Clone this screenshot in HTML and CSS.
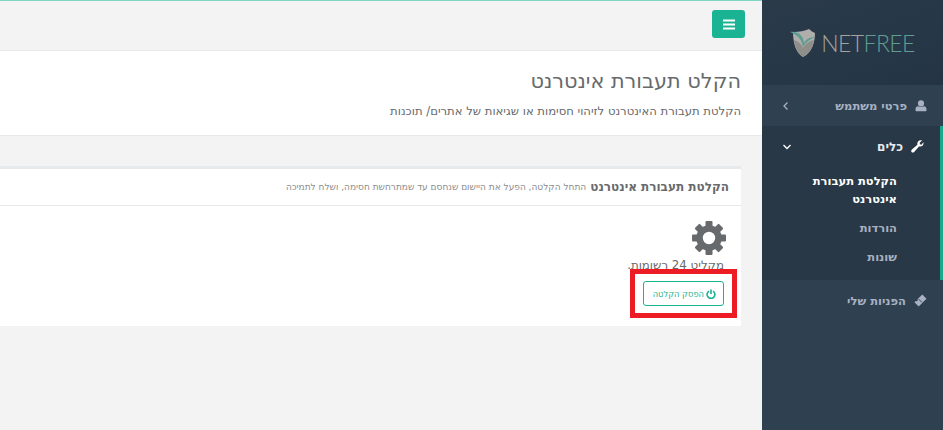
FILE: index.html
```html
<!DOCTYPE html>
<html lang="he" dir="rtl">
  <head>
    <meta charset="utf-8">
    <title>NetFree</title>
    <link rel="stylesheet" href="styles.css">
  </head>
  <body>
<div id="wrapper">
  <nav class="sidebar">
    <div class="logo-box">
      <div class="logo" dir="ltr">
        <svg class="logo-shield" width="26" height="30" viewBox="0 0 26 30">
          <path d="M3 4 C9 4 15 3 19 1 C21 3 23 4 25 5 C25 16 21 25 13 29 C6 25 3 15 3 4 Z" fill="#b0aeaa"/>
          <path d="M4 12 C7 13 11 15 13 20 C15 16 19 13 24 12 C23 20 19 26 13 29 C8 26 5 19 4 12 Z" fill="#8f8e8b"/>
          <path d="M0 4 C7 3 13 6 14 15 C16 11 20 9 26 9 C20 11 16 14 13 19 C12 12 8 7 0 4 Z" fill="#5f9d92"/>
        </svg>
        <span class="logo-net">NET</span><span class="logo-free">FREE</span>
      </div>
    </div>
    <ul class="side-menu">
      <li class="side-item">
        <a class="side-link">
          <svg class="side-icon" width="12" height="12" viewBox="0 0 14 14"><circle cx="7" cy="4" r="3.600" fill="currentColor"/><path d="M1.500 13 C.8 13 .5 12.500 .5 12 C.5 9 1.500 7.300 3.500 7.300 C5 8.500 9 8.500 10.500 7.300 C12.500 7.300 13.500 9 13.500 12 C13.500 12.500 13.200 13 12.500 13 Z" fill="currentColor"/></svg>
          <span class="side-label">פרטי משתמש</span>
          <svg class="side-arrow" width="8" height="10" viewBox="0 0 8 10"><path d="M5.500 1.500 L2 5 L5.500 8.500" fill="none" stroke="currentColor" stroke-width="1.300"/></svg>
        </a>
      </li>
      <li class="side-item is-active">
        <a class="side-link">
          <svg class="side-icon" width="13" height="13" viewBox="0 0 14 14"><path d="M13.500 3.500 C13.500 6 11 7.700 8.600 6.900 L3.400 12.900 C2.600 13.800 1.200 13.700 .6 13 C-.1 12.200 .1 11 1 10.300 L6.900 5.200 C6.200 2.800 8 .3 10.500 .3 C11 .3 11.500 .4 11.900 .6 L9.300 3 L9.700 4.600 L11.300 5 L13.300 2.400 C13.400 2.700 13.500 3.100 13.500 3.500 Z" fill="currentColor"/></svg>
          <span class="side-label">כלים</span>
          <svg class="side-arrow" width="10" height="8" viewBox="0 0 10 8"><path d="M1.500 2 L5 5.500 L8.500 2" fill="none" stroke="currentColor" stroke-width="1.300"/></svg>
        </a>
        <ul class="sub-menu">
          <li class="sub-item is-current">הקלטת תעבורת אינטרנט</li>
          <li class="sub-item">הורדות</li>
          <li class="sub-item">שונות</li>
        </ul>
      </li>
      <li class="side-item">
        <a class="side-link">
          <svg class="side-icon" width="13" height="13" viewBox="0 0 14 14"><path d="M9 .5 L13.500 5 L5 13.500 L.5 9 L2 7.500 C2.800 8 3.500 7.800 3.800 7.300 C4.200 6.800 4.200 6.200 3.700 5.700 Z" fill="currentColor"/><path d="M5 5.500 L8.500 9" stroke="#2f4050" stroke-width="1"/></svg>
          <span class="side-label">הפניות שלי</span>
        </a>
      </li>
    </ul>
  </nav>

  <main class="page">
    <header class="topbar">
      <button class="menu-btn">
        <svg width="12" height="11" viewBox="0 0 12 11"><path d="M0 .5 H12 V2.500 H0 Z M0 4.500 H12 V6.500 H0 Z M0 8.500 H12 V10.500 H0 Z" fill="#fff"/></svg>
      </button>
    </header>

    <section class="page-heading">
      <h2>הקלט תעבורת אינטרנט</h2>
      <p>הקלטת תעבורת האינטרנט לזיהוי חסימות או שגיאות של אתרים/ תוכנות</p>
    </section>

    <div class="content">
      <section class="ibox">
        <div class="ibox-title">
          <h5>הקלטת תעבורת אינטרנט</h5>
          <small>התחל הקלטה, הפעל את היישום שנחסם עד שמתרחשת חסימה, ושלח לתמיכה</small>
        </div>
        <div class="ibox-content">
          <svg class="gear" width="34" height="34" viewBox="0 0 34 34">
            <g fill="#676a6c">
              <rect x="13.500" y="0" width="7" height="34" rx="1"/>
              <rect x="13.500" y="0" width="7" height="34" rx="1" transform="rotate(45 17 17)"/>
              <rect x="13.500" y="0" width="7" height="34" rx="1" transform="rotate(90 17 17)"/>
              <rect x="13.500" y="0" width="7" height="34" rx="1" transform="rotate(135 17 17)"/>
            </g>
            <circle cx="17" cy="17" r="9.500" fill="none" stroke="#676a6c" stroke-width="6.500"/>
            <circle cx="17" cy="17" r="6.200" fill="#fff"/>
          </svg>
          <div class="record-count">מקליט 24 רשומות.</div>
          <button class="stop-btn">
            <svg width="10" height="10" viewBox="0 0 11 11"><path d="M3.300 2.300 A4.300 4.300 0 1 0 7.700 2.300" fill="none" stroke="currentColor" stroke-width="1.800"/><path d="M5.500 .5 V5.500" stroke="currentColor" stroke-width="1.800"/></svg>
            הפסק הקלטה
          </button>
        </div>
      </section>
    </div>
  </main>
</div>
  </body>
</html>
```

FILE: styles.css
```css
html, body { height: 100%; }

body {
  margin: 0;
  overflow: hidden;
  font-family: "DejaVu Sans", sans-serif;
  font-size: 13px;
  color: #676a6c;
  background: #f3f3f4;
}

#wrapper { display: flex; height: 100%; }

/* sidebar */
.sidebar {
  width: 181px;
  flex-shrink: 0;
  background: #2f4050;
  color: #a7b1c2;
}

.logo-box {
  height: 85px;
  background: linear-gradient(160deg, #2a3a49 0%, #263747 60%, #243444 100%);
  display: flex;
  justify-content: center;
  align-items: center;
}

.logo { display: flex; align-items: center; margin-top: 1px; }
.logo-shield { margin-right: 5px; }
.logo-net, .logo-free { font-family: Lato, sans-serif; font-weight: 300; font-size: 23px; letter-spacing: -.6px; }
.logo-net { color: #a3a3a0; }
.logo-free { color: #5f9d92; }

.side-menu, .sub-menu { list-style: none; margin: 0; padding: 0; }

.side-link {
  display: flex;
  align-items: center;
  height: 41px;
  padding: 0 16px 0 20px;
  font-weight: 600;
  font-size: 11.500px;
}

.side-icon { margin-left: 8px; flex-shrink: 0; }
.side-label { flex: 1; }
.side-arrow { flex-shrink: 0; }

.is-active {
  background: #293846;
  border-right: 3px solid #19aa8d;
  height: 154px;
  box-sizing: border-box;
}
.is-active .side-link { color: #fff; font-size: 12px; }
.is-active .side-label { color: #e6e9ee; }

.sub-menu { padding: 0 43px 0 30px; margin-top: -1px; }
.sub-item {
  padding: 4px 0 5px;
  font-size: 11.500px;
  font-weight: 600;
  line-height: 20px;
}
.sub-item.is-current { color: #fff; line-height: 18px; padding: 6px 0 6px; }

/* main column */
.page { flex: 1; min-width: 0; border-top: 1px solid #7fd6c5; }

.topbar { height: 50px; padding: 9px 17px 0 0; box-sizing: border-box; border-bottom: 1px solid #e7eaec; }

.menu-btn {
  display: flex;
  align-items: center;
  justify-content: center;
  width: 33px;
  height: 28px;
  padding: 0;
  border: 0;
  border-radius: 3px;
  background: #1ab394;
}

.page-heading {
  height: 85px;
  box-sizing: border-box;
  padding: 17px 21px 0 0;
  background: #fff;
  border-bottom: 1px solid #e7eaec;
}
.page-heading h2 { margin: 0; font-size: 20.800px; font-weight: 400; line-height: 26px; }
.page-heading p { margin: 8px 0 0; font-size: 11.650px; line-height: 18px; }

.content { padding: 30px 21px 0 0; }

.ibox { background: #fff; border-top: 3px solid #e7eaec; }
.ibox-title {
  height: 36px;
  padding-right: 12px;
  display: flex;
  align-items: center;
  gap: 4px;
  border-bottom: 1px solid #e7eaec;
}
.ibox-title h5 { margin: 0; font-size: 12px; font-weight: 700; }
.ibox-title small { font-size: 9px; color: #8a8c8e; }

.ibox-content { height: 120px; padding: 15px 12px 0 0; box-sizing: border-box; }

.gear { display: block; margin-right: 3px; }
.record-count { font-size: 11.800px; line-height: 16px; margin: 2px 5px 0 0; }

.stop-btn {
  position: relative;
  display: flex;
  align-items: center;
  gap: 2px;
  width: 81px;
  height: 25px;
  margin: 8px 5px 0 0;
  padding: 0 7px;
  box-sizing: border-box;
  background: #fff;
  border: 1px solid #1ab394;
  border-radius: 3px;
  color: #1ab394;
  font-family: inherit;
  font-size: 8.300px;
  white-space: nowrap;
}

/* red annotation frame drawn over the button */
.stop-btn::after {
  content: "";
  position: absolute;
  top: -13px;
  bottom: -13px;
  left: -14px;
  right: -14px;
  border: 5px solid #ed1c24;
}
```
